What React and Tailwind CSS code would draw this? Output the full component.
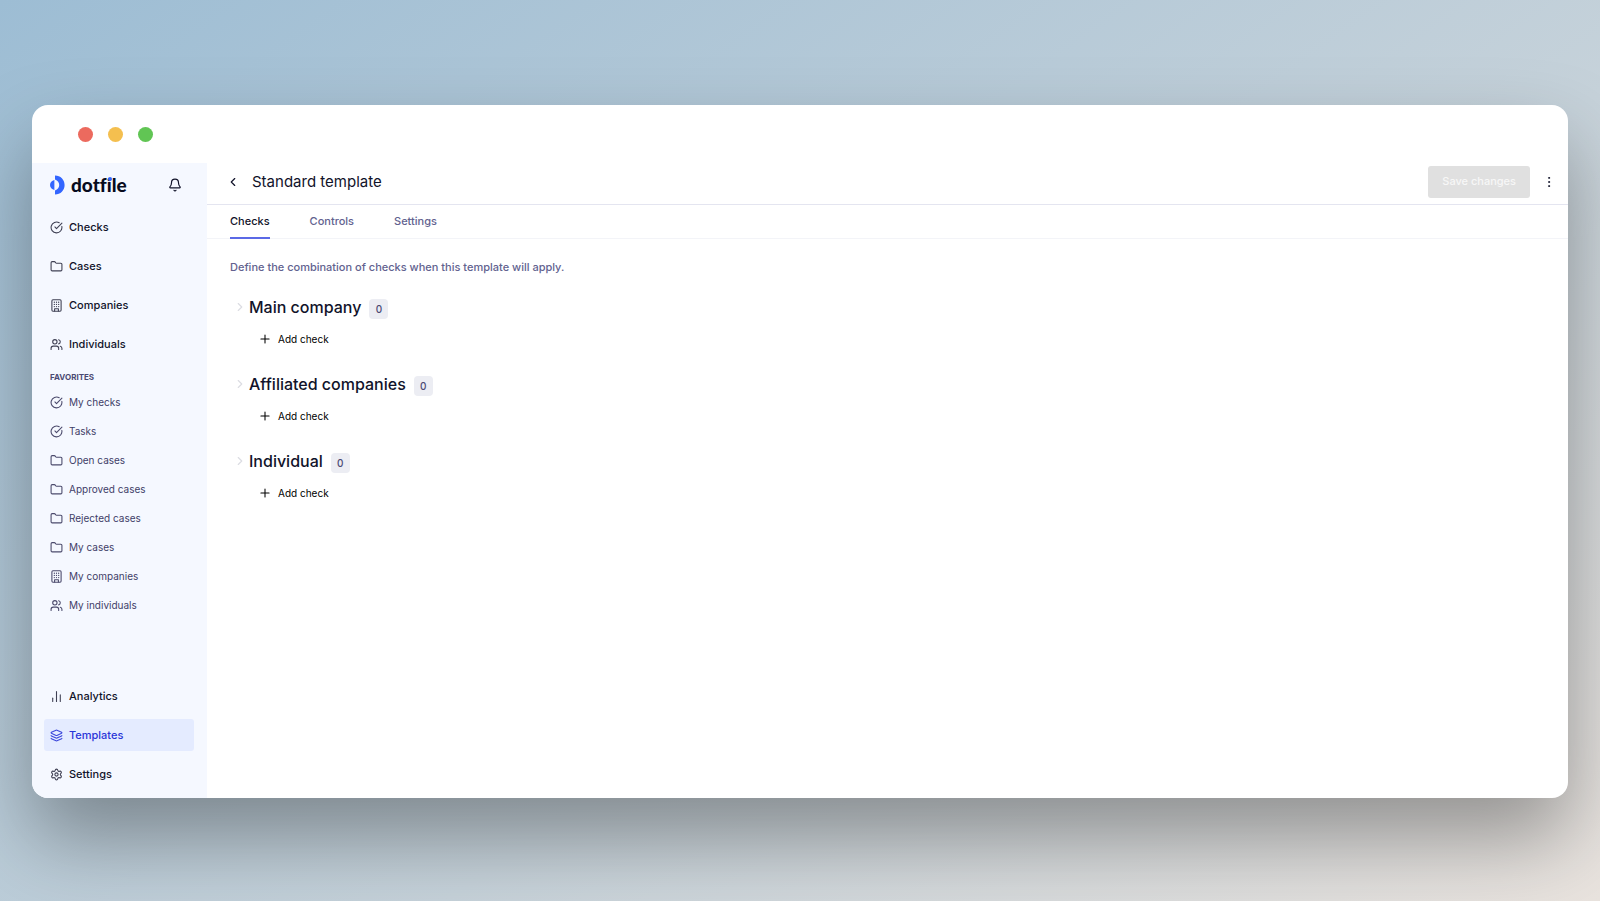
import { useState } from 'react';
import {
  Bell,
  ChartNoAxesColumn,
  ChevronLeft,
  ChevronRight,
  CircleCheckBig,
  EllipsisVertical,
  Folder,
  Layers,
  Plus,
  Settings,
  Users,
} from 'lucide-react';

function BuildingIcon({ className }) {
  return (
    <svg viewBox="0 0 24 24" fill="none" stroke="currentColor" strokeWidth="2" strokeLinecap="round" strokeLinejoin="round" className={className} aria-hidden="true">
      <rect x="3.5" y="1.5" width="17" height="21" rx="2" />
      <path d="M8 6h.01M12 6h.01M16 6h.01M8 10h.01M12 10h.01M16 10h.01M8 14h.01M12 14h.01M16 14h.01" strokeWidth="2.4" />
      <path d="M8.5 22v-4h7v4" />
    </svg>
  );
}

const mainNav = [
  { label: 'Checks', icon: CircleCheckBig },
  { label: 'Cases', icon: Folder },
  { label: 'Companies', icon: BuildingIcon },
  { label: 'Individuals', icon: Users },
];

const favorites = [
  { label: 'My checks', icon: CircleCheckBig },
  { label: 'Tasks', icon: CircleCheckBig },
  { label: 'Open cases', icon: Folder },
  { label: 'Approved cases', icon: Folder },
  { label: 'Rejected cases', icon: Folder },
  { label: 'My cases', icon: Folder },
  { label: 'My companies', icon: BuildingIcon },
  { label: 'My individuals', icon: Users },
];

const bottomNav = [
  { label: 'Analytics', icon: ChartNoAxesColumn },
  { label: 'Templates', icon: Layers, active: true },
  { label: 'Settings', icon: Settings },
];

const tabs = ['Checks', 'Controls', 'Settings'];

const sections = [
  { title: 'Main company', count: 0 },
  { title: 'Affiliated companies', count: 0 },
  { title: 'Individual', count: 0 },
];

function Logo() {
  return (
    <a href="#" className="flex items-center gap-[6px]">
      <svg viewBox="0 0 15 20" className="w-[15px] h-5" aria-hidden="true">
        <path d="M5 0.5C10.6 0.5 14.6 4.7 14.6 10S10.6 19.5 5 19.5V15.4C7.8 14.4 9.2 12.4 9.2 10S7.8 5.6 5 4.6Z" fill="#3366ff" />
        <path d="M4.4 5V15C1.8 14.5 0 12.4 0 10S1.8 5.5 4.4 5Z" fill="#3366ff" />
      </svg>
      <span className="font-['Lato',sans-serif] font-black text-[19px] leading-5 text-[#070b1d] [font-variant-ligatures:none]">
        dotf
        <span className="relative">
          i
          <span className="absolute left-px top-[4px] w-1 h-1 rounded-full bg-[#3366ff]" />
        </span>
        le
      </span>
    </a>
  );
}

function NavItem({ label, icon: Icon, active }) {
  return (
    <a
      href="#"
      className={`flex items-center gap-[6px] h-8 px-[6px] rounded-[3px] text-[11px] font-medium ${
        active ? 'bg-[#e4ebff] text-[#2a35d8]' : 'text-[#11132a]'
      }`}
    >
      <Icon className={`w-[13px] h-[13px] shrink-0 ${active ? 'text-[#3c47dc]' : 'text-[#3f4054]'}`} />
      {label}
    </a>
  );
}

export default function App() {
  const [tab, setTab] = useState('Checks');

  return (
    <div className="min-h-screen flex flex-col px-8 pt-[105px] pb-[103px] bg-[linear-gradient(145deg,#9dbdd4_0%,#c6d2da_60%,#e9e3de_100%)] font-['Inter',sans-serif]">
      <div className="flex-1 flex flex-col rounded-2xl overflow-hidden bg-white shadow-[0_40px_80px_rgba(0,0,0,0.34)]">
        <div className="flex items-center gap-[15px] h-[58px] px-[46px]">
          <span className="w-[15px] h-[15px] rounded-full bg-[#ec6a5e]" />
          <span className="w-[15px] h-[15px] rounded-full bg-[#f4bf4f]" />
          <span className="w-[15px] h-[15px] rounded-full bg-[#61c554]" />
        </div>

        <div className="flex-1 flex">
          <aside className="w-[175px] shrink-0 flex flex-col bg-[#f5f8ff] pl-3 pr-[13px] pt-3 pb-2">
            <div className="flex items-center justify-between pl-[6px] pr-[12px] h-5">
              <Logo />
              <button type="button" aria-label="Notifications" className="text-[#11132a]">
                <Bell className="w-[14px] h-[14px]" />
              </button>
            </div>

            <nav className="flex flex-col gap-[7px] mt-4">
              {mainNav.map((item) => <NavItem key={item.label} {...item} />)}
            </nav>

            <h2 className="mt-[9px] px-[6px] text-[8px] leading-4 font-bold text-[#4b4a73]">FAVORITES</h2>
            <nav className="flex flex-col mt-[3px]">
              {favorites.map(({ label, icon: Icon }) => (
                <a key={label} href="#" className="flex items-center gap-[6px] h-[29px] px-[6px] text-[10px] text-[#3f3e68]">
                  <Icon className="w-[13px] h-[13px] shrink-0 text-[#4b4a6c]" />
                  {label}
                </a>
              ))}
            </nav>

            <nav className="flex flex-col gap-[7px] mt-auto">
              {bottomNav.map((item) => <NavItem key={item.label} {...item} />)}
            </nav>
          </aside>

          <main className="flex-1 min-w-0">
            <header className="flex items-center h-[42px] pl-[19px] pr-3 pb-1 border-b border-[#e4e5f0]">
              <button type="button" aria-label="Back" className="text-[#11132a]">
                <ChevronLeft className="w-[14px] h-[14px]" />
              </button>
              <h1 className="ml-3 text-[15px] leading-5 text-[#11132a]">Standard template</h1>
              <button type="button" disabled className="ml-auto h-8 px-[14px] rounded-[3px] bg-[#e0e0e0] text-[11px] font-medium text-[#f7f7f7]">
                Save changes
              </button>
              <button type="button" aria-label="More actions" className="ml-3 text-[#11132a]">
                <EllipsisVertical className="w-[14px] h-[14px] stroke-[1.6]" />
              </button>
            </header>

            <div className="flex gap-10 h-[34px] px-[23px] border-b border-[#f3f4f8]">
              {tabs.map((t) => (
                <button
                  key={t}
                  type="button"
                  onClick={() => setTab(t)}
                  className={`h-[34px] text-[11px] font-medium border-b-2 ${
                    tab === t ? 'border-[#5b69e6] text-[#11132a]' : 'border-transparent text-[#62628f]'
                  }`}
                >
                  {t}
                </button>
              ))}
            </div>

            <div className="px-[23px] pt-5">
              <p className="text-[11px] leading-4 font-medium text-[#62628f]">
                Define the combination of checks when this template will apply.
              </p>
              <div className="flex flex-col gap-[17px] mt-5">
                {sections.map(({ title, count }) => (
                  <section key={title}>
                    <div className="flex items-center h-6 pl-[3px]">
                      <ChevronRight className="w-[14px] h-[14px] text-[#dcdde3]" />
                      <h2 className="ml-[2px] text-base font-medium text-[#11132a]">{title}</h2>
                      <span className="ml-2 mt-1 flex items-center justify-center w-[19px] h-5 rounded-[4px] bg-[#ecedf3] text-[10px] font-medium text-[#4b4a73]">
                        {count}
                      </span>
                    </div>
                    <button type="button" className="flex items-center gap-[6px] mt-1 h-8 pl-[28px] text-[10px] text-black">
                      <Plus className="w-[14px] h-[14px] stroke-[1.8]" />
                      Add check
                    </button>
                  </section>
                ))}
              </div>
            </div>
          </main>
        </div>
      </div>
    </div>
  );
}
